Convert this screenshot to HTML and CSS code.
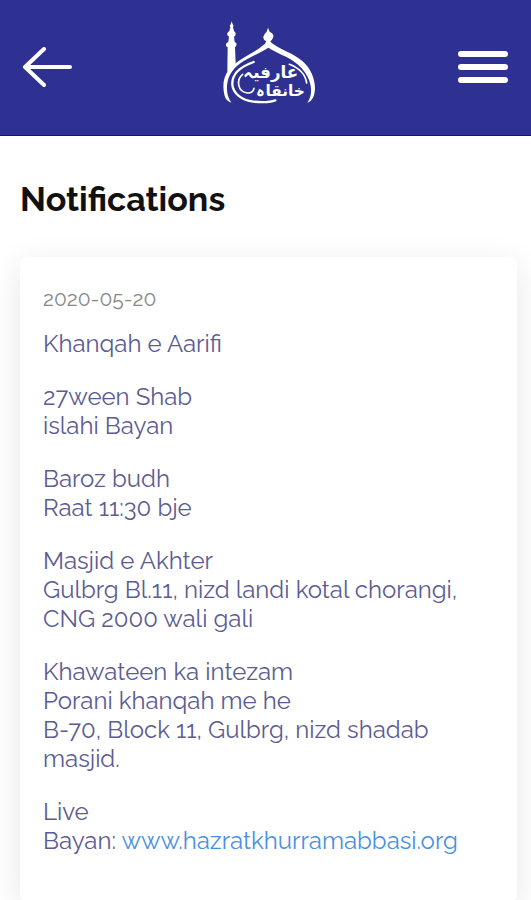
FILE: index.html
```
<!DOCTYPE html>
<html lang="en">
<head>
    <meta charset="UTF-8">
    <meta name="viewport" content="width=device-width, initial-scale=1.0">
    <title>Notifications</title>
    <link rel="stylesheet" href="styles.css">
</head>
<body>
    <header class="topbar">
        <button type="button" class="icon-btn" aria-label="Back">
            <svg width="50" height="42" viewBox="0 0 50 42">
                <path d="M48 20H3M22 2L3 20L22 38" />
            </svg>
        </button>

        <svg class="logo" viewBox="9 21 309 300" role="img" aria-label="Khanqah e Aarifi">
            <!-- minaret -->
            <path class="fill" d="M65 31L68 40Q73 44 69 49L72 60L77 66L76 74L72 77L74 92L80 98L78 106L75 109L77 158L52 182L53 109L48 105L48 98L55 92L57 77L52 73L52 66L58 60L61 49Q57 44 62 40Z" />
            <!-- dome with finial -->
            <path class="fill" d="M174 50L179 62Q194 70 189 80Q186 87 181 91Q184 98 194 102C215 117 249 126 278 151C309 178 324 227 309 260Q304 270 292 276Q307 253 302 225C296 184 261 153 228 137C204 126 187 117 175 110C161 120 134 132 112 144C78 162 59 184 53 211C48 235 51 256 64 275Q47 269 43 251C35 215 44 184 70 162C96 139 135 124 156 105Q168 98 169 91Q158 85 160 77Q162 69 170 62Z" />
            <!-- inner sweeps around the name -->
            <path class="line" d="M131 153C94 166 65 188 67 221C69 247 95 268 130 272C160 275 180 274 196 268" />
            <path class="line thin" d="M98 190C78 206 82 242 112 246C124 247 130 240 132 232" />
            <path class="line thin" d="M238 160C270 172 286 190 290 216" />
            <text class="name" x="182" y="200" font-size="50">عارفیہ</text>
            <text class="name" x="212" y="256" font-size="46">خانقاہ</text>
        </svg>

        <button type="button" class="icon-btn" aria-label="Menu">
            <svg class="menu" width="52" height="36" viewBox="0 0 52 36">
                <path d="M4 4H48M4 17H48M4 30H48" />
            </svg>
        </button>
    </header>

    <main class="content">
        <h1>Notifications</h1>

        <article class="card">
            <time datetime="2020-05-20">2020-05-20</time>
            <p>Khanqah e Aarifi</p>
            <p>27ween Shab<br>islahi Bayan</p>
            <p>Baroz budh<br>Raat 11:30 bje</p>
            <p>Masjid e Akhter<br>Gulbrg Bl.11, nizd landi kotal chorangi, CNG 2000 wali gali</p>
            <p>Khawateen ka intezam<br>Porani khanqah me he<br>B-70, Block 11, Gulbrg, nizd shadab masjid.</p>
            <p>Live<br>Bayan: <a href="#">www.hazratkhurramabbasi.org</a></p>
        </article>
    </main>
</body>
</html>
```
FILE: styles.css
```
* {
    box-sizing: border-box;
}

body {
    margin: 0;
    background-color: #fff;
    font-family: Raleway, Lato, sans-serif;
    color: #5c5c92;
}

.topbar {
    display: flex;
    align-items: center;
    justify-content: space-between;
    height: 136px;
    padding: 0 22px;
    border-bottom: 1px solid #14147a;
    background-color: #2e3192;
}

.icon-btn {
    display: flex;
    padding: 0;
    border: none;
    background: none;
    cursor: pointer;
}

.icon-btn path {
    fill: none;
    stroke: #fff;
    stroke-width: 4;
    stroke-linecap: round;
    stroke-linejoin: round;
}

.icon-btn .menu path {
    stroke-width: 6;
}

.logo {
    width: 103px;
    height: 100px;
}

.logo .fill {
    fill: #fff;
}

.logo .line {
    fill: none;
    stroke: #fff;
    stroke-width: 7;
    stroke-linecap: round;
}

.logo .thin {
    stroke-width: 5;
}

.logo .name {
    fill: #fff;
    font-family: "DejaVu Sans", sans-serif;
    font-weight: bold;
    text-anchor: middle;
}

.content {
    padding: 41px 14px 0 20px;
}

h1 {
    margin: 0 0 36px;
    font-size: 34px;
    font-weight: 700;
    line-height: 44px;
    color: #111;
}

.card {
    padding: 27px 23px 22px;
    border-radius: 6px;
    background-color: #fff;
    box-shadow: 0 8px 32px rgba(0, 0, 0, 0.1);
}

.card time {
    display: block;
    margin-bottom: 16px;
    font-size: 21px;
    line-height: 29px;
    color: #888;
}

.card p {
    margin: 0 0 24px;
    font-size: 24px;
    font-weight: 400;
    line-height: 29px;
}

.card a {
    color: #4a90e2;
    text-decoration: none;
}
```
